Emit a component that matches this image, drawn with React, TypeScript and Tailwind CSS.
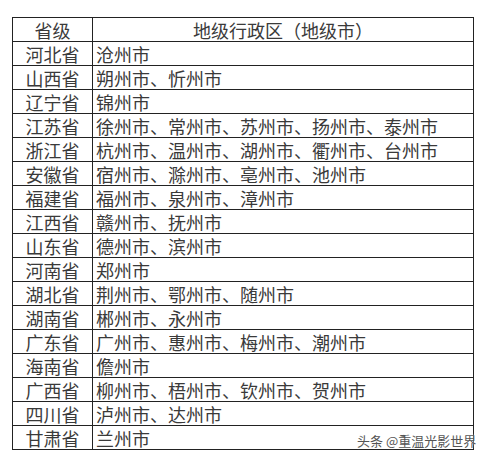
import React from "react";

const rows: [string, string][] = [
  ["河北省", "沧州市"],
  ["山西省", "朔州市、忻州市"],
  ["辽宁省", "锦州市"],
  ["江苏省", "徐州市、常州市、苏州市、扬州市、泰州市"],
  ["浙江省", "杭州市、温州市、湖州市、衢州市、台州市"],
  ["安徽省", "宿州市、滁州市、亳州市、池州市"],
  ["福建省", "福州市、泉州市、漳州市"],
  ["江西省", "赣州市、抚州市"],
  ["山东省", "德州市、滨州市"],
  ["河南省", "郑州市"],
  ["湖北省", "荆州市、鄂州市、随州市"],
  ["湖南省", "郴州市、永州市"],
  ["广东省", "广州市、惠州市、梅州市、潮州市"],
  ["海南省", "儋州市"],
  ["广西省", "柳州市、梧州市、钦州市、贺州市"],
  ["四川省", "泸州市、达州市"],
  ["甘肃省", "兰州市"],
];

export default function App() {
  return (
    <div
      className="relative w-[488px] h-[460px] bg-white pt-[17px] pl-[12px]"
      style={{ fontFamily: '"Noto Sans CJK SC", sans-serif' }}
    >
      <table className="border-collapse w-[462px] text-[18px] text-[#3a3a3a] leading-none">
        <thead>
          <tr className="h-[24px]">
            <th className="w-[80px] border border-[#222] font-normal text-center">省级</th>
            <th className="border border-[#222] font-normal text-center">地级行政区（地级市）</th>
          </tr>
        </thead>
        <tbody>
          {rows.map(([prov, cities]) => (
            <tr key={prov} className="h-[24px]">
              <td className="border border-[#222] text-center">{prov}</td>
              <td className="border border-[#222] pl-[3px]">{cities}</td>
            </tr>
          ))}
        </tbody>
      </table>
      <div className="absolute left-[357px] top-[434px] text-[13px] text-[#555] leading-none [text-shadow:0_0_2px_#fff]">
        头条 @重温光影世界
      </div>
    </div>
  );
}
